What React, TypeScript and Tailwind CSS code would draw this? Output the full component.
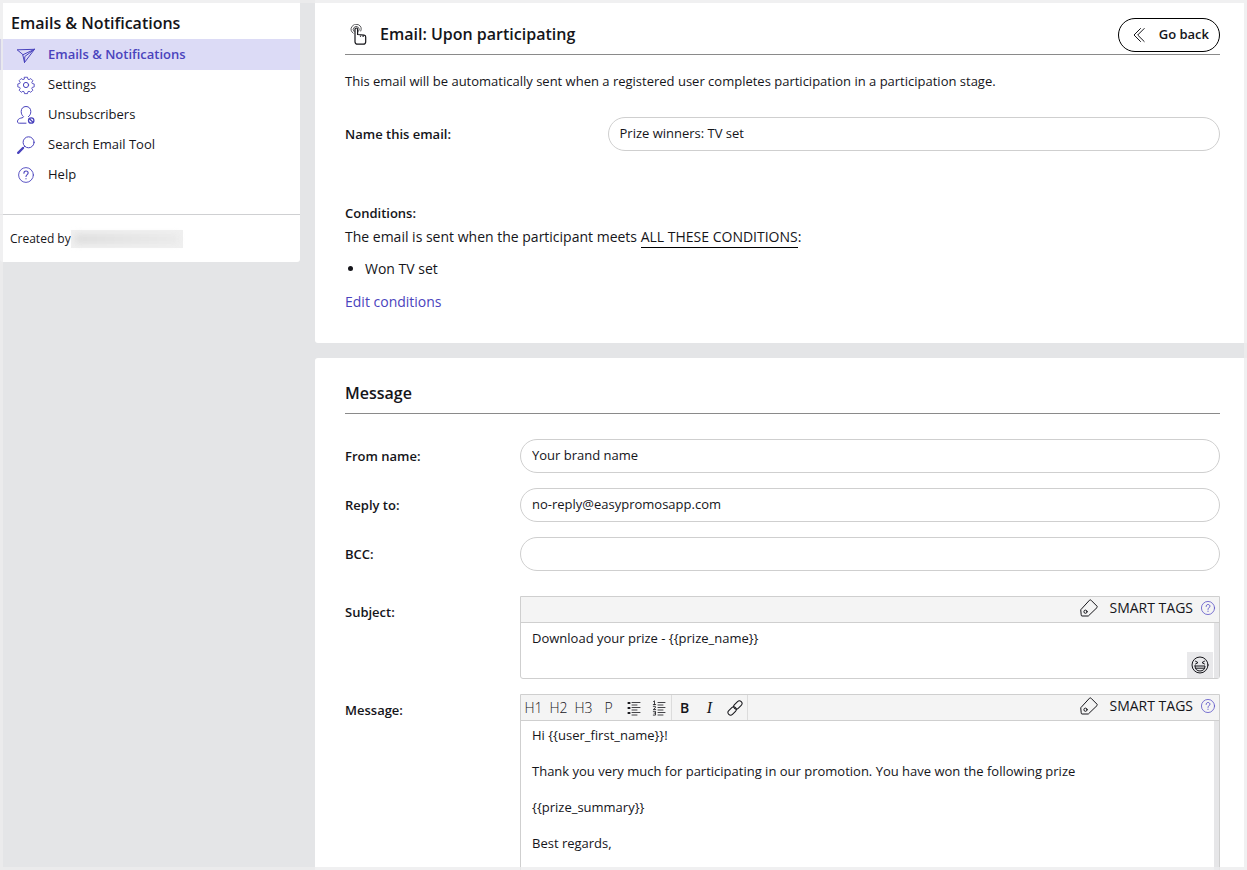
import type { ReactNode } from "react";

function Svg({ children, className, box = 20 }: { children: ReactNode; className: string; box?: number }) {
  return (
    <svg
      viewBox={`0 0 ${box} ${box}`}
      className={className}
      fill="none"
      stroke="currentColor"
      strokeWidth="1"
      strokeLinecap="round"
      strokeLinejoin="round"
      aria-hidden="true"
    >
      {children}
    </svg>
  );
}

const SendIcon = () => (
  <Svg className="size-5">
    <path d="M1.500 4.800 18.500 4.300 8.500 17.500 6.800 9.800zM18.500 4.300 6.800 9.800M8.500 17.500 8.800 11.500 18.500 4.300" />
  </Svg>
);

const GearIcon = () => (
  <Svg className="size-5">
    <circle cx="10" cy="10" r="2.600" />
    <path d="M8.300 1.500h3.400l.5 2.200 1.300.500 1.900-1.200 2.400 2.400-1.200 1.900.5 1.300 2.200.500v3.400l-2.200.500-.5 1.300 1.200 1.900-2.400 2.400-1.900-1.200-1.300.500-.5 2.200H8.300l-.5-2.200-1.300-.5-1.900 1.200-2.400-2.400 1.200-1.900-.5-1.300-2.200-.5V9.100l2.200-.5.500-1.300-1.200-1.900 2.400-2.400 1.900 1.200 1.300-.5z" transform="translate(10 10) scale(.88) translate(-10 -10.300)" />
  </Svg>
);

const UserOffIcon = () => (
  <Svg className="size-5">
    <path d="M12.400 11.700c1.500-1 2.400-2.900 2.400-5.200 0-2.900-1.800-5-4.800-5s-4.800 2.100-4.800 5c0 2.300.9 4.200 2.400 5.200-.3 1.300-2.600 1.100-4.200 1.900C2 14.300 1.300 15.800 1.500 17c.2.900 1 1.200 1.800 1.200H10" />
    <circle cx="15.200" cy="15.500" r="2.700" strokeWidth="1.300" />
    <path d="m13.400 13.700 3.600 3.600" strokeWidth="1.300" />
  </Svg>
);

const SearchIcon = () => (
  <Svg className="size-5">
    <circle cx="12.600" cy="7.300" r="5.500" />
    <path d="m8.600 11.400-1.500 1.500" />
    <path d="m7 13-4.800 4.800" strokeWidth="2.400" />
  </Svg>
);

const HelpIcon = ({ className }: { className: string }) => (
  <Svg className={className}>
    <circle cx="10" cy="10" r="8.200" />
    <path d="M7.700 8c0-1.500 1-2.400 2.300-2.400s2.400.9 2.400 2.200c0 1.700-2.400 1.900-2.400 3.900M10 13.900v.4" strokeWidth="1.200" />
  </Svg>
);

const TapIcon = () => (
  <svg viewBox="0 0 18 22" className="h-[22px] w-[18px]" fill="none" stroke="currentColor" strokeLinejoin="round" strokeLinecap="round" aria-hidden="true">
    <path d="M5 12.500V5.400c0-1.900 2.600-1.900 2.600 0v5.100l6.500.7c1 .1 1.600.8 1.600 1.700v4.800c0 1.500-1 2.500-2.500 2.500H7.500c-1.500 0-2.500-1-2.500-2.500zM7.600 10.500v-1M10.500 10.800v1.400M13.100 11.100v1.300" strokeWidth="1.200" />
    <path d="M4 7.500A3 3 0 1 1 8.700 7.200M3.200 9.200A5 5 0 1 1 10.800 7" strokeWidth="0.700" />
  </svg>
);

const ChevronsIcon = () => (
  <Svg className="size-4" box={16}>
    <path d="M9.500 1.500 3 8l6.500 6.500M13.200 1.500 6.700 8l6.500 6.500" />
  </Svg>
);

const TagIcon = () => (
  <Svg className="size-5">
    <path d="M2 11.500 10.500 2.200c.5-.5 1-.5 1.500 0l6 6c.4.500.4 1 0 1.400l-8.700 8.400H3c-.5 0-.8-.3-.8-.8z" />
    <circle cx="6.500" cy="13.700" r="1.600" />
  </Svg>
);

const GrinIcon = () => (
  <Svg className="size-[18px]" box={18}>
    <circle cx="9" cy="9" r="8" />
    <path d="M4.500 5.200 7 6.600 4.500 8M13.500 5.200 11 6.600 13.500 8M4 10h10c0 3.200-2 5-5 5s-5-1.800-5-5zM4.700 12.200h8.600" />
  </Svg>
);

const BulletsIcon = () => (
  <Svg className="size-4" box={16}>
    <path d="M6 2.500h8M6 5h5M6 7.500h8M6 10h5M6 12.500h8M6 15h5" strokeWidth=".8" />
    <path d="M2.500 3h1M2.500 8h1M2.500 13h1" strokeWidth="2.200" />
  </Svg>
);

const NumbersIcon = () => (
  <Svg className="size-4" box={16}>
    <path d="M7 2.500h7M7 5h5M7 7.500h7M7 10h5M7 12.500h7M7 15h5" strokeWidth=".8" />
    <path d="m2.500 1.500 1-.7v3.700M2.300 4.500h2.400M2.300 6.300h2v1.600l-2 1.600h2.400M2.300 11.300h2.200v1.800H3M4.500 13.100v2H2.300" strokeWidth=".8" />
  </Svg>
);

const LinkIcon = () => (
  <Svg className="size-4" box={16}>
    <rect x="6.100" y="2.400" width="9.500" height="5.200" rx="2.600" transform="rotate(-45 10.900 5)" />
    <rect x="0.400" y="8.400" width="9.500" height="5.200" rx="2.600" transform="rotate(-45 5.100 11)" />
  </Svg>
);

const navItems = [
  { label: "Emails & Notifications", icon: <SendIcon />, active: true },
  { label: "Settings", icon: <GearIcon />, active: false },
  { label: "Unsubscribers", icon: <UserOffIcon />, active: false },
  { label: "Search Email Tool", icon: <SearchIcon />, active: false },
  { label: "Help", icon: <HelpIcon className="mx-px size-[18px]" />, active: false },
];

function Sidebar() {
  return (
    <aside className="w-[300px] shrink-0 self-start rounded-b-[3px] bg-white">
      <h2 className="px-[11px] pt-[11px] pb-1 text-base leading-6 font-semibold">Emails &amp; Notifications</h2>
      <nav>
        {navItems.map((item) => (
          <a
            key={item.label}
            href="#"
            aria-current={item.active ? "page" : undefined}
            className={
              item.active
                ? "flex h-[31px] items-center gap-3 border-l border-[#5a52c0] bg-[#dcdbf6] pl-[15px] text-[13px] font-semibold text-[#4a43bd]"
                : "flex h-[30px] items-center gap-3 pl-4 text-[13px]"
            }
          >
            <span className="shrink-0 text-[#4a43bd]">{item.icon}</span>
            {item.label}
          </a>
        ))}
      </nav>
      <div className="mt-6 flex h-12 items-center border-t border-[#cfd0d2] pl-[10px] text-xs">
        Created by
        <span className="h-[18px] w-28 bg-[#f0f0f0] p-1">
          <span className="block h-full bg-linear-to-r from-[#dedede] via-[#e4e4e4] to-[#eaeaea] blur-[3px]" />
        </span>
      </div>
    </aside>
  );
}

const fieldClass = "h-[34px] w-full min-w-0 rounded-full border border-[#cfcfcf] bg-white px-[11px] pb-[2px] text-[13px] outline-none";
const labelClass = "text-[13px] leading-5 font-semibold";

function TextRow({ id, label, value }: { id: string; label: string; value: string }) {
  return (
    <div className="grid grid-cols-[20%_1fr] items-center">
      <label htmlFor={id} className={labelClass}>{label}</label>
      <input id={id} type="text" defaultValue={value} className={fieldClass} />
    </div>
  );
}

function EditorBar({ children }: { children?: ReactNode }) {
  return (
    <div className="flex h-[26px] items-stretch border-b border-[#cfcfcf] bg-[#f4f4f4]">
      {children}
      <div className="ml-auto flex items-center pr-[3px] pb-[3px]">
        <button type="button" className="flex items-center gap-[10px] text-sm leading-5">
          <TagIcon />
          SMART TAGS
        </button>
        <button type="button" aria-label="Smart tags help" className="ml-[7px] text-[#5a52c8]">
          <HelpIcon className="size-4" />
        </button>
      </div>
    </div>
  );
}

function Tool({ label, children }: { label: string; children: ReactNode }) {
  return (
    <button type="button" aria-label={label} className="flex w-[25px] items-center justify-center text-sm font-light">
      {children}
    </button>
  );
}

const message = `Hi {{user_first_name}}!

Thank you very much for participating in our promotion. You have won the following prize

{{prize_summary}}

Best regards,
`;

export default function App() {
  return (
    <div className="flex h-screen gap-[15px] overflow-hidden bg-[#e4e5e7] font-['Open_Sans',sans-serif] text-[#15151a]">
      <Sidebar />
      <main className="flex min-w-0 flex-1 flex-col gap-[15px] overflow-y-auto [scrollbar-width:none]">
        <section className="shrink-0 rounded-bl-[3px] bg-white pr-[27px] pb-[31px] pl-[30px]">
          <header className="flex items-center border-b border-[#8a8a8a] pt-[18px] pb-[2px]">
            <span className="pl-[5px]"><TapIcon /></span>
            <h1 className="ml-3 pb-[2px] text-base leading-6 font-semibold">Email: Upon participating</h1>
            <button type="button" className="ml-auto flex h-[34px] items-center gap-3 rounded-full border border-black pr-[10px] pl-3 text-[13px] font-semibold">
              <ChevronsIcon />
              Go back
            </button>
          </header>
          <p className="mt-4 text-[13px] leading-5">
            This email will be automatically sent when a registered user completes participation in a participation stage.
          </p>
          <div className="mt-[26px] grid grid-cols-[30%_1fr] items-center">
            <label htmlFor="email-name" className={labelClass}>Name this email:</label>
            <input id="email-name" type="text" defaultValue="Prize winners: TV set" className={fieldClass} />
          </div>
          <h2 className="mt-[52px] text-[13px] leading-5 font-semibold">Conditions:</h2>
          <p className="mt-1 text-[14px] leading-5">
            The email is sent when the participant meets{" "}
            <button type="button" className="border-b border-black">ALL THESE CONDITIONS</button>:
          </p>
          <ul className="mt-[11px] list-disc pl-5 text-[14px] leading-5">
            <li>Won TV set</li>
          </ul>
          <a href="#" className="mt-[13px] block w-fit text-[14px] leading-5 text-[#4a43bd]">Edit conditions</a>
        </section>

        <section className="shrink-0 rounded-tl-[3px] bg-white pr-[27px] pb-8 pl-[30px]">
          <h2 className="border-b border-[#8a8a8a] pt-[23px] pb-2 text-base leading-6 font-semibold">Message</h2>
          <div className="mt-[25px] flex flex-col gap-[15px]">
            <TextRow id="from" label="From name:" value="Your brand name" />
            <TextRow id="reply" label="Reply to:" value="no-reply@easypromosapp.com" />
            <TextRow id="bcc" label="BCC:" value="" />
          </div>
          <div className="mt-[25px] grid grid-cols-[20%_1fr] items-start">
            <label htmlFor="subject" className={`${labelClass} pt-[6px]`}>Subject:</label>
            <div className="rounded-b-[3px] border border-[#cfcfcf]">
              <EditorBar />
              <div className="relative flex border-r-[5px] border-[#e6e6e8]">
                <textarea
                  id="subject"
                  defaultValue="Download your prize - {{prize_name}}"
                  className="h-[55px] w-full resize-none overflow-hidden px-[11px] pt-[6px] text-[13px] leading-[18px] outline-none"
                />
                <button type="button" aria-label="Insert emoji" className="absolute right-px bottom-0 flex size-[26px] items-center justify-center bg-[#e9e9eb]">
                  <GrinIcon />
                </button>
              </div>
            </div>
          </div>
          <div className="mt-[15px] grid grid-cols-[20%_1fr] items-start">
            <label htmlFor="message" className={`${labelClass} pt-[6px]`}>Message:</label>
            <div className="rounded-b-[3px] border border-[#cfcfcf]">
              <EditorBar>
                <div className="flex border-r border-[#dcdcdc]">
                  <Tool label="Heading 1">H1</Tool>
                  <Tool label="Heading 2">H2</Tool>
                  <Tool label="Heading 3">H3</Tool>
                  <Tool label="Paragraph">P</Tool>
                  <Tool label="Bulleted list"><BulletsIcon /></Tool>
                  <Tool label="Numbered list"><NumbersIcon /></Tool>
                </div>
                <div className="flex border-r border-[#dcdcdc]">
                  <Tool label="Bold"><b className="font-semibold">B</b></Tool>
                  <Tool label="Italic"><i className="font-['Liberation_Serif',serif] text-base">I</i></Tool>
                  <Tool label="Link"><LinkIcon /></Tool>
                </div>
              </EditorBar>
              <div className="flex border-r-[5px] border-[#e6e6e8]">
                <textarea
                  id="message"
                  defaultValue={message}
                  className="h-60 w-full resize-none overflow-hidden px-[11px] pt-[5px] text-[13px] leading-[18px] outline-none"
                />
              </div>
            </div>
          </div>
        </section>
      </main>
      <div className="pointer-events-none fixed inset-0 border-3 border-[#ececed]/80" />
    </div>
  );
}
